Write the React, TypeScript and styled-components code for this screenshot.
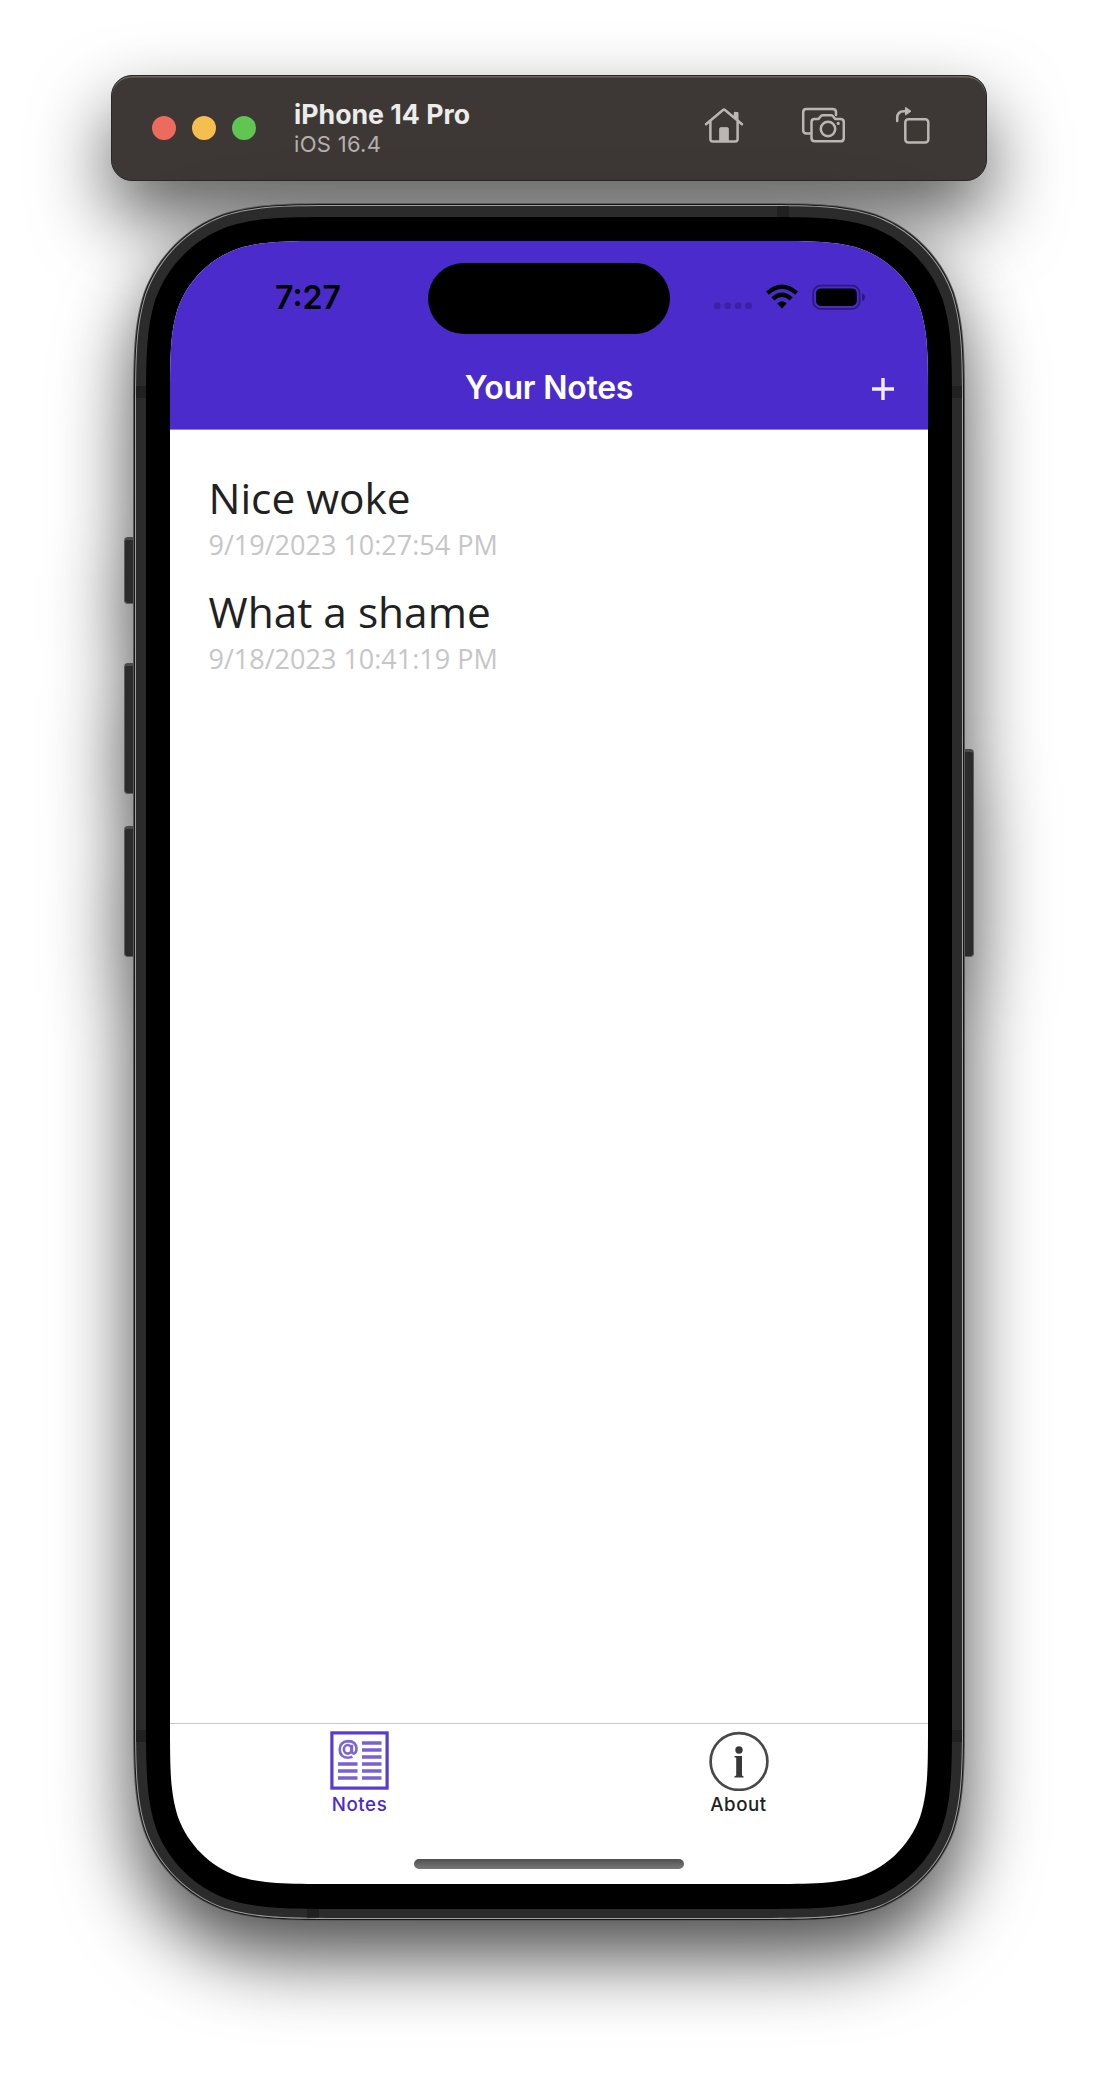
import React from "react";
import styled, { createGlobalStyle } from "styled-components";

const GlobalStyle = createGlobalStyle`
  * { box-sizing: border-box; }
  body { margin: 0; background: #fff; font-family: Inter, "Liberation Sans", sans-serif; }
`;

/* Rounded rectangle with continuous-curvature corners. */
const squircle = (w: number, h: number, r: number) => {
  const a = 1.528665 * r, b = 1.088493 * r, c = 0.868407 * r;
  const d = 0.631494 * r, e = 0.074911 * r, f = 0.372824 * r, g = 0.16906 * r;
  return [
    `M${a} 0 L${w - a} 0`,
    `C${w - b} 0 ${w - c} 0 ${w - d} ${e}`,
    `C${w - f} ${g} ${w - g} ${f} ${w - e} ${d}`,
    `C${w} ${c} ${w} ${b} ${w} ${a} L${w} ${h - a}`,
    `C${w} ${h - b} ${w} ${h - c} ${w - e} ${h - d}`,
    `C${w - g} ${h - f} ${w - f} ${h - g} ${w - d} ${h - e}`,
    `C${w - c} ${h} ${w - b} ${h} ${w - a} ${h} L${a} ${h}`,
    `C${b} ${h} ${c} ${h} ${d} ${h - e}`,
    `C${f} ${h - g} ${g} ${h - f} ${e} ${h - d}`,
    `C0 ${h - c} 0 ${h - b} 0 ${h - a} L0 ${a}`,
    `C0 ${b} 0 ${c} ${e} ${d}`,
    `C${g} ${f} ${f} ${g} ${d} ${e}`,
    `C${c} 0 ${b} 0 ${a} 0Z`,
  ].join(" ");
};

const Desktop = styled.main`
  width: 1098px;
  height: 2074px;
  padding-top: 75px;
  display: flex;
  flex-direction: column;
  align-items: center;
  gap: 22px;
  overflow: hidden;
  background: #fff;
`;

const Toolbar = styled.header`
  width: 876px;
  height: 106px;
  padding: 0 55px 0 40px;
  display: flex;
  align-items: center;
  background: #3d3835;
  border-radius: 21px;
  border: 1px solid #262826;
  box-shadow: inset 0 1.5px 0 #6a6763, 0 36px 76px rgba(0, 0, 0, 0.64);
`;

const Lights = styled.div`
  display: flex;
  gap: 16px;
`;

const Light = styled.span<{ $color: string }>`
  width: 24px;
  height: 24px;
  border-radius: 50%;
  background: ${(p) => p.$color};
`;

const Device = styled.div`
  margin: -1px 0 0 38px;
  flex: 1;
  display: flex;
  flex-direction: column;
`;

const DeviceName = styled.strong`
  font-size: 26.7px;
  line-height: 32px;
  font-weight: 700;
  color: #ececeb;
`;

const DeviceOs = styled.span`
  font-size: 22px;
  line-height: 28px;
  letter-spacing: 0.3px;
  color: #b5b0ad;
`;

const Actions = styled.div`
  display: flex;
  align-items: center;
  margin-top: -6px;
`;

const ActionIcon = styled.svg<{ $gap?: number }>`
  display: block;
  margin-left: ${(p) => p.$gap ?? 0}px;
  fill: none;
  stroke: #bbb6b2;
  stroke-width: 2.5;
  stroke-linejoin: round;
  stroke-linecap: round;
`;

const Phone = styled.section`
  position: relative;
  width: 832px;
  height: 1718px;
  filter: drop-shadow(0 36px 38px rgba(0, 0, 0, 0.7));
`;

const SideButton = styled.i<{ $side: "left" | "right"; $top: number; $height: number }>`
  position: absolute;
  ${(p) => p.$side}: -9px;
  top: ${(p) => p.$top}px;
  width: 13px;
  height: ${(p) => p.$height}px;
  border-radius: 4px;
  border: 1.5px solid #5c5c5c;
  border-top: 3px solid #4b4b4b;
  background: #2b2b2b;
`;

const Layer = styled.div<{ $w: number; $h: number; $r: number; $pad: string; $color: string }>`
  position: relative;
  width: ${(p) => p.$w}px;
  height: ${(p) => p.$h}px;
  padding: ${(p) => p.$pad};
  background: ${(p) => p.$color};
  clip-path: path("${(p) => squircle(p.$w, p.$h, p.$r)}");
`;

const Antenna = styled.i<{ $x: number; $y: number; $vertical?: boolean }>`
  position: absolute;
  left: ${(p) => p.$x}px;
  top: ${(p) => p.$y}px;
  width: ${(p) => (p.$vertical ? 12 : 10)}px;
  height: ${(p) => (p.$vertical ? 11 : 12)}px;
  background: #202020;
`;

const Screen = styled.div`
  width: 758px;
  height: 1643px;
  display: flex;
  flex-direction: column;
  background: #fff;
  clip-path: path("${squircle(758, 1643, 106)}");
`;

const AppHeader = styled.div`
  height: 189px;
  background: #4b2bcb;
  border-bottom: 1px solid #9180dc;
`;

const StatusBar = styled.div`
  height: 114px;
  display: grid;
  grid-template-columns: 258px 242px 258px;
  align-items: center;
`;

const Clock = styled.time`
  padding-left: 18px;
  text-align: center;
  font-size: 32px;
  line-height: 36px;
  font-weight: 600;
  color: #000;
`;

const Island = styled.div`
  height: 71px;
  border-radius: 36px;
  background: #000;
`;

const StatusIcons = styled.svg`
  display: block;
  margin: -2px 0 0 43px;
`;

const TitleBar = styled.div`
  height: 65px;
  display: grid;
  grid-template-columns: 90px 1fr 90px;
  align-items: center;
`;

const Title = styled.h1`
  grid-column: 2;
  margin: 0;
  text-align: center;
  font-size: 32px;
  line-height: 38px;
  letter-spacing: -0.25px;
  font-weight: 600;
  color: #fff;
`;

const AddButton = styled.button`
  margin: 3px 0 0 33px;
  width: 24px;
  height: 24px;
  padding: 0;
  border: 0;
  background: none;
`;

const NoteList = styled.ul`
  flex: 1;
  margin: 0;
  padding: 39px 39px 0 38.5px;
  list-style: none;
  font-family: "Open Sans", sans-serif;
`;

const Note = styled.li`
  height: 114px;
`;

const NoteTitle = styled.div`
  font-size: 42.4px;
  line-height: 58px;
  color: #212121;
`;

const NoteDate = styled.div`
  font-size: 27px;
  line-height: 36px;
  color: #c6c6c6;
`;

const TabBar = styled.nav`
  height: 161px;
  border-top: 1px solid #c9c9c9;
  display: grid;
  grid-template: 104px 1fr / 1fr 1fr;
  justify-items: center;
`;

const Tab = styled.div<{ $active?: boolean }>`
  padding-top: 7px;
  display: flex;
  flex-direction: column;
  align-items: center;
  gap: 2px;
  color: ${(p) => (p.$active ? "#4b2bcb" : "#212121")};
  font-size: 18.7px;
  line-height: 24px;
  letter-spacing: 0.6px;
  font-weight: 500;
  svg { display: block; }
`;

const HomeIndicator = styled.div`
  grid-column: 1 / 3;
  width: 270px;
  height: 10px;
  margin-top: 31px;
  border-radius: 5px;
  background: linear-gradient(#505050, #787878);
`;

const TEXT_LINES = [11.5, 18.5, 25.5, 32.5, 39.5, 46.5];

const notes = [
  { title: "Nice woke", date: "9/19/2023 10:27:54 PM" },
  { title: "What a shame", date: "9/18/2023 10:41:19 PM" },
];

const HomeIcon = () => (
  <ActionIcon width="40" height="36" viewBox="0 0 40 36">
    <path d="M2 17.3 19 3Q20 2.2 21 3L38 17.3M6.4 14.5V32Q6.4 34.4 8.8 34.4H31.2Q33.6 34.4 33.6 32V14.5M31 11V6" />
    <path d="M31 5.5h3V14l-3-2.5Z" fill="#bbb6b2" strokeWidth="1" />
    <path d="M15.7 34V21.5Q15.7 20.7 16.5 20.7H23.5Q24.3 20.7 24.3 21.5V34Z" fill="#bbb6b2" strokeWidth="1" />
  </ActionIcon>
);

const CameraIcon = () => (
  <ActionIcon $gap={57} width="44" height="36" viewBox="0 0 44 36">
    <path d="M9 26.6H5.5Q2.2 26.6 2.2 23.2V5.2Q2.2 2 5.5 2H31.5Q35 2 35 5V8" />
    <path d="M13.5 12H17.5L20.2 8.8Q20.8 8.2 21.8 8.2H30Q31 8.2 31.6 8.8L34.2 12H39.5Q42.8 12 42.8 15.2V31Q42.8 34.3 39.5 34.3H13.8Q10.5 34.3 10.5 31V15.2Q10.5 12 13.5 12Z" />
    <circle cx="27" cy="22" r="7.2" />
    <circle cx="37.2" cy="16.4" r="1.6" fill="#bbb6b2" stroke="none" />
  </ActionIcon>
);

const RotateIcon = () => (
  <ActionIcon $gap={50} width="36" height="38" viewBox="0 0 36 38">
    <rect x="10.3" y="13.2" width="23" height="23.2" rx="3" />
    <path d="M2.2 15V12Q2.2 5.2 9 5.2H11" />
    <path d="M10.8 1.6 16 5.2 10.8 8.8Z" fill="#bbb6b2" strokeWidth="1" />
  </ActionIcon>
);

const NewsIcon = () => (
  <svg width="60" height="60" viewBox="-0.5 -0.5 60 60" fill="none" stroke="#4b2bcb">
    <rect x="1.4" y="1.4" width="55.2" height="55.2" strokeWidth="3.2" opacity="0.92" />
    {TEXT_LINES.map((y, i) => (
      <path
        key={y}
        d={`M31.5 ${y}H51${i > 2 ? `M7.5 ${y}H27` : ""}`}
        strokeWidth="3.4"
        opacity="0.75"
      />
    ))}
    <g strokeWidth="2.6" opacity="0.72">
      <ellipse cx="17.2" cy="17.8" rx="3.8" ry="4.3" />
      <path d="M21.4 13.2V20Q21.6 22.3 23.6 22Q26 21 26 17Q25.5 9.6 17.8 9.6Q9.4 10 9.2 18Q9.4 26 17.5 26.2Q20 26.2 21.8 25.2" />
    </g>
  </svg>
);

const InfoIcon = () => (
  <svg width="60" height="60" viewBox="0 -0.5 60 60" fill="#383838">
    <circle cx="30" cy="30" r="28.4" fill="none" stroke="#484848" strokeWidth="2.7" />
    <circle cx="30" cy="18.5" r="3.7" />
    <path d="M25.5 24.5H33V44L34.6 45V46H25.4V45L27.2 44V26.3L25.5 25.8Z" />
  </svg>
);

const App = () => (
  <>
    <GlobalStyle />
    <Desktop>
      <Toolbar>
        <Lights>
          <Light $color="#ed6a5e" />
          <Light $color="#f5bf4f" />
          <Light $color="#61c554" />
        </Lights>
        <Device>
          <DeviceName>iPhone 14 Pro</DeviceName>
          <DeviceOs>iOS 16.4</DeviceOs>
        </Device>
        <Actions>
          <HomeIcon />
          <CameraIcon />
          <RotateIcon />
        </Actions>
      </Toolbar>
      <Phone>
        <SideButton $side="left" $top={334} $height={67} />
        <SideButton $side="left" $top={460} $height={131} />
        <SideButton $side="left" $top={623} $height={131} />
        <SideButton $side="right" $top={546} $height={208} />
        <Layer $w={832} $h={1718} $r={142} $pad="1px" $color="#5a5a5a">
          <Layer $w={830} $h={1716} $r={141} $pad="1px" $color="#161616">
            <Layer $w={828} $h={1714} $r={140} $pad="1px" $color="#a0a0a0">
              <Layer $w={826} $h={1712} $r={139} $pad="11px 10px 9px" $color="#2b2b2b">
                <Antenna $x={0} $y={180} />
                <Antenna $x={816} $y={180} />
                <Antenna $x={0} $y={1524} />
                <Antenna $x={816} $y={1524} />
                <Antenna $vertical $x={641} $y={0} />
                <Antenna $vertical $x={171} $y={1702} />
                <Layer $w={806} $h={1692} $r={129} $pad="24px" $color="#000">
                  <Screen>
                    <AppHeader>
                      <StatusBar>
                        <Clock>7:27</Clock>
                        <Island />
                        <StatusIcons width="155" height="28" viewBox="0 0 155 28">
                          <g fill="#000" opacity="0.2">
                            <rect x="1" y="19.5" width="6.5" height="6.5" rx="2.5" />
                            <rect x="11.4" y="19.5" width="6.5" height="6.5" rx="2.5" />
                            <rect x="21.8" y="19.5" width="6.5" height="6.5" rx="2.5" />
                            <rect x="32.2" y="19.5" width="6.5" height="6.5" rx="2.5" />
                          </g>
                          <g fill="none" stroke="#000" strokeWidth="4.4">
                            <path d="M54.4 10.2Q69 -2.6 83.6 10.2" />
                            <path d="M59.8 15.8Q69 7.6 78.2 15.8" />
                          </g>
                          <path d="M64.2 20.6Q69 16 73.8 20.6L69 25.6Z" />
                          <rect x="100.2" y="2.6" width="46.4" height="23.2" rx="7.4" fill="none" stroke="#000" strokeOpacity="0.38" strokeWidth="1.8" />
                          <rect x="103" y="5.4" width="40.8" height="17.6" rx="5" />
                          <path d="M149.2 10.3Q152 11.5 152 14.2T149.2 18Z" opacity="0.45" />
                        </StatusIcons>
                      </StatusBar>
                      <TitleBar>
                        <Title>Your Notes</Title>
                        <AddButton aria-label="Add note">
                          <svg width="24" height="24" viewBox="0 0 24 24" stroke="#fff" strokeWidth="3.4" display="block">
                            <path d="M12 1V23M1 12H23" strokeOpacity="0.92" />
                          </svg>
                        </AddButton>
                      </TitleBar>
                    </AppHeader>
                    <NoteList>
                      {notes.map((n) => (
                        <Note key={n.date}>
                          <NoteTitle>{n.title}</NoteTitle>
                          <NoteDate>{n.date}</NoteDate>
                        </Note>
                      ))}
                    </NoteList>
                    <TabBar>
                      <Tab $active>
                        <NewsIcon />
                        <span>Notes</span>
                      </Tab>
                      <Tab>
                        <InfoIcon />
                        <span>About</span>
                      </Tab>
                      <HomeIndicator />
                    </TabBar>
                  </Screen>
                </Layer>
              </Layer>
            </Layer>
          </Layer>
        </Layer>
      </Phone>
    </Desktop>
  </>
);

export default App;
